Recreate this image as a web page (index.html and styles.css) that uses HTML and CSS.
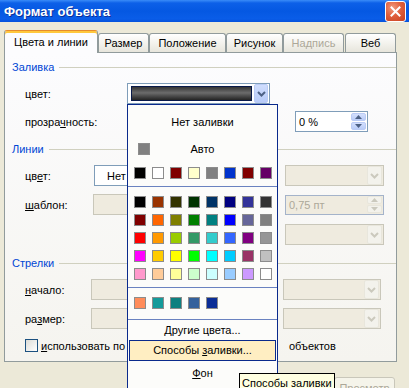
FILE: index.html
```html
<!DOCTYPE html>
<html lang="ru">
<head>
    <meta charset="UTF-8">
    <title>Формат объекта</title>
    <link rel="stylesheet" href="styles.css">
</head>
<body>
    <div class="titlebar">
        <span class="title">Формат объекта</span>
        <span class="close">
            <svg width="11" height="11" viewBox="0 0 11 11"><path d="M1.5 1.5 L9.5 9.5 M9.5 1.5 L1.5 9.5" stroke="#fff" stroke-width="2" stroke-linecap="square"/></svg>
        </span>
    </div>

    <div class="tabs">
        <div class="tab tab-active">Цвета и линии</div>
        <div class="tab">Размер</div>
        <div class="tab">Положение</div>
        <div class="tab">Рисунок</div>
        <div class="tab tab-disabled">Надпись</div>
        <div class="tab">Веб</div>
    </div>

    <div class="panel">
        <div class="group-head">Заливка</div>
        <div class="row row-first">
            <span class="lbl lbl-fill">цвет:</span>
            <div class="combo combo-fill">
                <span class="current-color"></span>
                <span class="drop-btn"><svg width="9" height="6" viewBox="0 0 9 6"><polyline points="1,1 4.5,4.5 8,1" fill="none" stroke="#4d6185" stroke-width="2"/></svg></span>
            </div>
        </div>
        <div class="row row-second">
            <span class="lbl lbl-wide">прозра<u>ч</u>ность:</span>
            <div class="spin spin-percent">
                <span class="spin-value">0 %</span>
                <span class="spin-btns">
                    <span class="spin-btn"><svg width="7" height="4" viewBox="0 0 7 4"><polygon points="0,4 3.5,0 7,4" fill="#4d6185"/></svg></span>
                    <span class="spin-btn"><svg width="7" height="4" viewBox="0 0 7 4"><polygon points="0,0 3.5,4 7,0" fill="#4d6185"/></svg></span>
                </span>
            </div>
        </div>

        <div class="group-head group-lines">Линии</div>
        <div class="row row-first">
            <span class="lbl lbl-line">цв<u>е</u>т:</span>
            <div class="combo combo-left"><span class="combo-text">Нет линий</span></div>
            <div class="combo combo-right disabled">
                <span class="drop-btn"><svg width="9" height="6" viewBox="0 0 9 6"><polyline points="1,1 4.5,4.5 8,1" fill="none" stroke="#cbc9bd" stroke-width="2"/></svg></span>
            </div>
        </div>
        <div class="row row-mid">
            <span class="lbl lbl-pattern"><u>ш</u>аблон:</span>
            <div class="combo combo-left disabled"></div>
            <div class="spin spin-right disabled">
                <span class="spin-value">0,75 пт</span>
                <span class="spin-btns">
                    <span class="spin-btn"><svg width="7" height="4" viewBox="0 0 7 4"><polygon points="0,4 3.5,0 7,4" fill="#cbc9bd"/></svg></span>
                    <span class="spin-btn"><svg width="7" height="4" viewBox="0 0 7 4"><polygon points="0,0 3.5,4 7,0" fill="#cbc9bd"/></svg></span>
                </span>
            </div>
        </div>
        <div class="row row-third">
            <div class="combo combo-right disabled">
                <span class="drop-btn"><svg width="9" height="6" viewBox="0 0 9 6"><polyline points="1,1 4.5,4.5 8,1" fill="none" stroke="#cbc9bd" stroke-width="2"/></svg></span>
            </div>
        </div>

        <div class="group-head group-arrows">Стрелки</div>
        <div class="row row-first row-arrows">
            <span class="lbl lbl-arrow"><u>н</u>ачало:</span>
            <div class="combo combo-left disabled"></div>
            <div class="combo combo-right disabled">
                <span class="drop-btn"><svg width="9" height="6" viewBox="0 0 9 6"><polyline points="1,1 4.5,4.5 8,1" fill="none" stroke="#cbc9bd" stroke-width="2"/></svg></span>
            </div>
        </div>
        <div class="row row-mid row-arrows">
            <span class="lbl lbl-arrow">ра<u>з</u>мер:</span>
            <div class="combo combo-left disabled"></div>
            <div class="combo combo-right disabled">
                <span class="drop-btn"><svg width="9" height="6" viewBox="0 0 9 6"><polyline points="1,1 4.5,4.5 8,1" fill="none" stroke="#cbc9bd" stroke-width="2"/></svg></span>
            </div>
        </div>
        <label class="check-row">
            <span class="checkbox"></span>
            <span class="check-text"><u>и</u>спользовать по<span class="check-gap"> умолчанию для новых </span>объектов</span>
        </label>
    </div>

    <div class="footer">
        <button class="btn" disabled>Просмотр</button>
    </div>

    <div class="color-menu">
        <div class="menu-item menu-none">Нет заливки</div>
        <div class="menu-auto"><span class="swatch swatch-auto"></span><span>Авто</span></div>
        <div class="swatch-grid swatch-top" id="topColors"></div>
        <div class="menu-sep"></div>
        <div class="swatch-grid swatch-palette" id="paletteColors"></div>
        <div class="menu-sep"></div>
        <div class="swatch-grid swatch-recent" id="recentColors"></div>
        <div class="menu-sep sep-last"></div>
        <div class="menu-item menu-more"><u>Д</u>ругие цвета...</div>
        <div class="menu-item menu-hot">Способы <u>з</u>аливки...</div>
        <div class="menu-item menu-bg"><u>Ф</u>он</div>
    </div>

    <div class="tooltip">Способы заливки</div>

    <script>
        // Office palette shown in the fill colour menu
        const topColors = ['#000000', '#ffffff', '#800000', '#ffffcc', '#808080', '#0033cc', '#800000', '#660066'];
        const paletteColors = [
            '#000000', '#993300', '#333300', '#003300', '#003366', '#000080', '#333399', '#333333',
            '#800000', '#ff6600', '#808000', '#008000', '#008080', '#0000ff', '#666699', '#808080',
            '#ff0000', '#ff9900', '#99cc00', '#339966', '#33cccc', '#3366ff', '#800080', '#969696',
            '#ff00ff', '#ffcc00', '#ffff00', '#00ff00', '#00ffff', '#00ccff', '#993366', '#c0c0c0',
            '#ff99cc', '#ffcc99', '#ffff99', '#ccffcc', '#ccffff', '#99ccff', '#cc99ff', '#ffffff'
        ];
        const recentColors = ['#ff8c5a', '#149a9a', '#0e8080', '#34619c', '#0a2d96'];

        function fillSwatches(id, colors) {
            const box = document.getElementById(id);
            colors.forEach(color => {
                const swatch = document.createElement('span');
                swatch.className = 'swatch';
                swatch.style.background = color;
                box.appendChild(swatch);
            });
        }

        fillSwatches('topColors', topColors);
        fillSwatches('paletteColors', paletteColors);
        fillSwatches('recentColors', recentColors);
    </script>
</body>
</html>
```

FILE: styles.css
```css
* { margin: 0; padding: 0; box-sizing: border-box; }

body { width: 409px; height: 388px; overflow: hidden; position: relative; background: #ece9d8; font-family: 'Liberation Sans', Arial, sans-serif; font-size: 11px; color: #000; }

u { text-decoration: underline; text-underline-offset: 1px; }

/* title bar */
.titlebar { height: 22px; display: flex; align-items: center; justify-content: space-between; padding: 0 3px 0 4px; background: linear-gradient(#3a8cf8 0, #0d60e8 3px, #0558e2 50%, #0a5de8 85%, #0552dc 100%); }

.title { color: #fff; font-weight: bold; font-size: 13px; text-shadow: 1px 1px 0 #0c2f98; }

.close { width: 21px; height: 21px; border: 1px solid #fff; border-radius: 3px; background: radial-gradient(circle at 35% 30%, #f19a7e 0%, #e0603d 45%, #c8401f 100%); display: flex; align-items: center; justify-content: center; }

/* tabs */
.tabs { display: flex; align-items: flex-end; height: 22px; margin-top: 8px; padding-left: 4px; }

.tab { height: 19px; border: 1px solid #919b9c; border-bottom: none; border-radius: 3px 3px 0 0; background: linear-gradient(#ffffff, #f1f0ea 60%, #e7e5dc); text-align: center; line-height: 18px; white-space: nowrap; }

.tab:nth-child(1) { width: 94px; }
.tab:nth-child(2) { width: 51px; }
.tab:nth-child(3) { width: 77px; }
.tab:nth-child(4) { width: 57px; }
.tab:nth-child(5) { width: 61px; }
.tab:nth-child(6) { width: 51px; margin-left: 1px; }

.tab-active { height: 23px; margin-bottom: -1px; position: relative; z-index: 1; background: #fcfcfe; border-top: 1px solid #e68b2c; box-shadow: inset 0 2px 0 #ffc83c; line-height: 22px; }

.tab-disabled { color: #aca899; }

/* tab page */
.panel { width: 393px; height: 310px; margin-left: 4px; border: 1px solid #919b9c; background: linear-gradient(#fcfcfe, #f5f4ef); padding: 7px 0 0 7px; }

.group-head { height: 14px; display: flex; align-items: center; color: #0046d5; }

.group-head::after { content: ''; flex: 1; border-top: 1px solid #d0d0bf; margin-left: 5px; }

.group-lines { margin-top: 10px; }

.group-arrows { margin-top: 11px; }

.row { display: flex; align-items: center; height: 21px; padding: 0 12px 0 13px; }

.row-first { margin-top: 9px; }

.row-second { margin-top: 7px; }

.row-mid { margin-top: 8px; }

.row-third { margin-top: 9px; }

.row-arrows { padding-right: 15px; }

.lbl { flex: none; }
.lbl-fill { width: 102px; }
.lbl-wide { width: 270px; }
.lbl-line { width: 69px; }
.lbl-pattern { width: 68px; }
.lbl-arrow { width: 66px; }

/* combo boxes */
.combo { height: 21px; border: 1px solid #7f9db9; background: #fff; display: flex; align-items: center; position: relative; }

.combo.disabled { border-color: #c9c7ba; background: #efebdf; }

.combo-fill { width: 143px; padding: 2px 1px 2px 3px; }

.current-color { flex: 1; height: 15px; border: 1px solid #0a1a4a; background: linear-gradient(#353535, #6c6c6c 45%, #4a4a4a 70%, #242424); }

.drop-btn { width: 14px; height: 19px; margin-left: 2px; border-radius: 2px; border: 1px solid #bacbf5; background: linear-gradient(#d0ddfd, #b7cbf8); display: flex; align-items: center; justify-content: center; }

.disabled .drop-btn { position: absolute; right: 1px; top: 0; height: 19px; width: 15px; border-color: #e8e6dc; background: #f3f2ec; }

.combo-left { width: 140px; flex: none; }

.combo-text { padding-left: 12px; white-space: nowrap; }

.combo-right { width: 99px; margin-left: auto; }

.row-arrows .combo-right { width: 98px; }

/* spin boxes */
.spin { height: 21px; border: 1px solid #7f9db9; background: #fff; display: flex; align-items: center; }

.spin-percent { width: 73px; }

.spin-right { width: 99px; height: 20px; margin-left: auto; }

.spin.disabled { background: #efebdf; color: #aca899; border-color: #a4b3ca; }

.spin-value { flex: 1; padding-left: 3px; white-space: nowrap; }

.spin-btns { width: 15px; height: 17px; margin-right: 1px; display: flex; flex-direction: column; gap: 1px; }

.spin-btn { flex: 1; border-radius: 2px; border: 1px solid #bacbf5; background: linear-gradient(#d3dffd, #b9ccf8); display: flex; align-items: center; justify-content: center; }

.disabled .spin-btn { border-color: #e8e6dc; background: #f3f2ec; }

/* checkbox */
.check-row { display: flex; align-items: center; height: 13px; margin-top: 10px; padding-left: 13px; }

.checkbox { width: 13px; height: 13px; flex: none; border: 1px solid #1c5180; background: linear-gradient(135deg, #dcdcd7, #ffffff); }

.check-text { margin-left: 3px; white-space: nowrap; }

.check-gap { word-spacing: 11px; }

/* bottom buttons */
.footer { display: flex; justify-content: flex-end; padding: 15px 14px 0 0; }

.btn { width: 61px; height: 23px; border: 1px solid #c9c7ba; border-radius: 3px; background: #f5f4ea; color: #aca899; font: inherit; line-height: 18px; padding-bottom: 2px; }

/* colour menu */
.color-menu { position: absolute; left: 127px; top: 104px; width: 151px; height: 290px; border: 1px solid #0a2a8c; background: #fcfcfa; padding-top: 6px; }

.menu-item { text-align: center; white-space: nowrap; }

.menu-none { height: 22px; line-height: 22px; }

.menu-auto { display: grid; grid-template-columns: 22px 1fr 22px; align-items: center; height: 22px; margin-top: 5px; }

.menu-auto .swatch { margin-left: 10px; }

.menu-auto span:last-child { text-align: center; }

.swatch-grid { display: grid; grid-template-columns: repeat(8, 12px); gap: 6px; padding-left: 6px; }

.swatch-top { margin-top: 7px; }

.swatch-palette { margin-top: 9px; }

.swatch-recent { margin-top: 9px; }

.swatch { display: block; width: 12px; height: 12px; border: 1px solid #8c8c8c; }

.swatch-auto { background: #808080; }

.menu-sep { height: 1px; margin-top: 7px; background: #6a82c0; }

.sep-last { margin-top: 10px; }

.menu-more { height: 20px; line-height: 21px; }

.menu-hot { height: 21px; line-height: 19px; margin: 0 1px; border: 1px solid #0a2a8c; background: #ffeec2; }

.menu-bg { height: 24px; line-height: 24px; }

/* tooltip */
.tooltip { position: absolute; left: 239px; top: 373px; height: 20px; padding: 0 2px; border: 1px solid #000; background: #ffffe1; line-height: 18px; white-space: nowrap; }
```
